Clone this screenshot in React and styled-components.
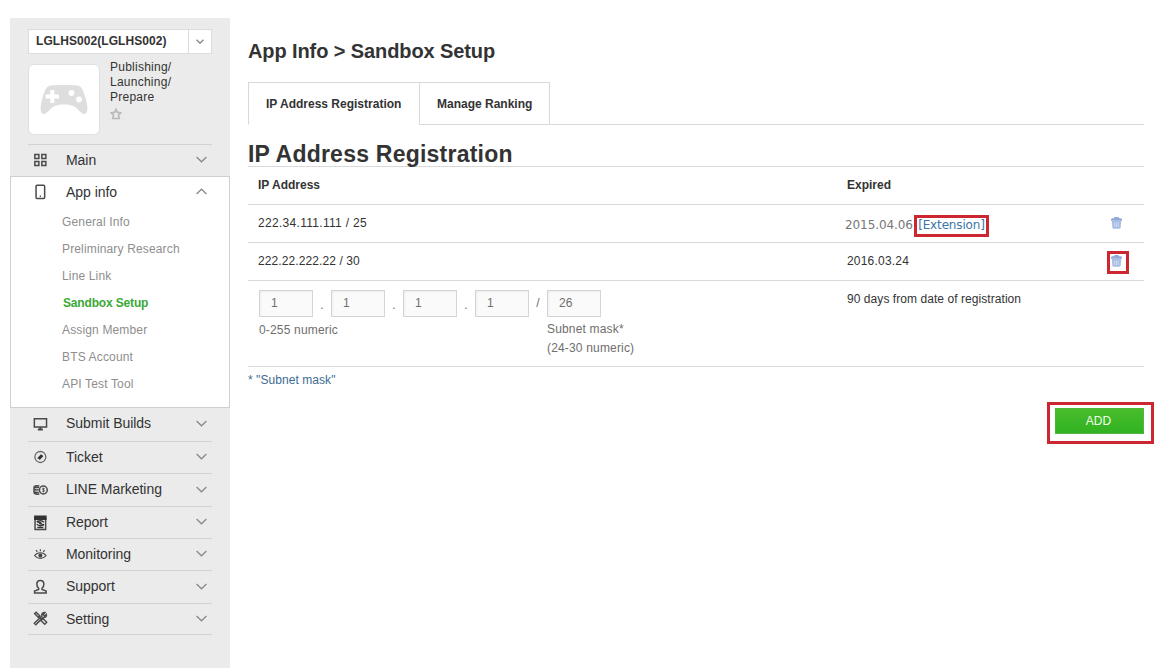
import React from "react";
import styled, { createGlobalStyle, css } from "styled-components";

const Global = createGlobalStyle`
  * { box-sizing: border-box; }
  body { margin: 0; background: #fff; overflow: hidden; }
  #root { font-family: "Liberation Sans", Arial, sans-serif; font-size: 12px; color: #333; }
`;

const Page = styled.div`
  display: flex;
  align-items: flex-start;
  width: 1155px;
  height: 668px;
  padding: 18px 0 0 10px;
`;

const Sidebar = styled.aside`
  width: 220px;
  height: 650px;
  flex: none;
  background: #ebebeb;
  padding-top: 11px;
`;

const AppSelect = styled.div`
  display: flex;
  width: 184px;
  height: 25px;
  margin-left: 18px;
  background: #fff;
  border: 1px solid #dcdcdc;
`;

const AppName = styled.div`
  flex: 1;
  padding-left: 7px;
  line-height: 23px;
  font-weight: bold;
  letter-spacing: ${(p) => p.$spacing}px;
  white-space: nowrap;
`;

const SelectArrow = styled.div`
  width: 23px;
  display: flex;
  align-items: center;
  justify-content: center;
  border-left: 1px solid #dcdcdc;
`;

const AppCard = styled.div`
  display: flex;
  height: 80px;
  margin: 10px 18px 0;
`;

const Thumb = styled.div`
  width: 72px;
  height: 71px;
  display: flex;
  align-items: center;
  justify-content: center;
  background: #fff;
  border: 1px solid #e0e0e0;
  border-radius: 6px;
`;

const Status = styled.div`
  margin: -4px 0 0 10px;
  line-height: 15px;
  letter-spacing: 0.25px;
  svg { display: block; margin-top: 3px; }
`;

const Row = styled.div`
  display: flex;
  align-items: center;
  height: ${(p) => p.$h}px;
  margin: 0 18px;
  padding: 0 5px ${(p) => p.$lift}px 4px;
  ${(p) => p.$top && css`border-top: 1px solid #d2d2d2;`}
  ${(p) => p.$bottom && css`border-bottom: 1px solid #d2d2d2;`}
`;

const RowIcon = styled.span`
  width: 16px;
  display: flex;
  justify-content: center;
  padding-top: ${(p) => p.$drop || 0}px;
`;

const RowLabel = styled.span`
  flex: 1;
  margin-left: 18px;
  font-size: 14px;
  letter-spacing: -0.04px;
`;

const OpenPanel = styled.div`
  height: 232px;
  background: #fff;
  border: 1px solid #d0d0d0;
  ${Row} { margin: 0 17px; }
`;

const SubItem = styled.div`
  height: 27px;
  line-height: 27px;
  padding-left: ${(p) => (p.$active ? 52 : 51)}px;
  color: ${(p) => (p.$active ? "#3aa935" : "#8e8e8e")};
  font-weight: ${(p) => (p.$active ? "bold" : "normal")};
  letter-spacing: ${(p) => (p.$active ? -0.16 : 0.15)}px;
`;

const Main = styled.main`
  width: 896px;
  margin-left: 18px;
`;

const Title = styled.h1`
  margin: 21px 0 0;
  font-size: 20px;
  line-height: 24px;
  letter-spacing: -0.1px;
`;

const Tabs = styled.div`
  display: flex;
  height: 43px;
  margin-top: 19px;
`;

const Tab = styled.div`
  width: ${(p) => p.$w}px;
  padding-left: 17px;
  line-height: 42px;
  font-weight: bold;
  border: 1px solid #d9d9d9;
  border-right-width: ${(p) => (p.$active ? 0 : 1)}px;
  border-bottom-color: ${(p) => (p.$active ? "transparent" : "#d9d9d9")};
`;

const TabRest = styled.div`
  flex: 1;
  border-bottom: 1px solid #d9d9d9;
`;

const Heading = styled.h2`
  margin: 16px 0 0;
  height: 25px;
  font-size: 23px;
  line-height: 26px;
  letter-spacing: 0.23px;
`;

const TableRow = styled.div`
  display: grid;
  grid-template-columns: 599px 1fr 33px;
  height: ${(p) => p.$h || 38}px;
  border-top: 1px solid #d9d9d9;
  line-height: 36px;
  font-weight: ${(p) => (p.$head ? "bold" : "normal")};
`;

const IpCell = styled.div`
  padding-left: 10px;
  letter-spacing: ${(p) => p.$spacing || 0}px;
`;

const DateCell = styled.div`
  letter-spacing: ${(p) => p.$spacing || 0}px;
`;

const ExpiringDate = styled.div`
  margin-left: -2px;
  font-family: "DejaVu Sans", Verdana, sans-serif;
  line-height: 40px;
  letter-spacing: -0.08px;
  color: #777;
`;

const Marked = styled.span`
  position: relative;
  display: inline-block;
  margin-left: ${(p) => p.$gap || 0}px;
  &::after {
    content: "";
    position: absolute;
    inset: ${(p) => p.$inset};
    border: 3px solid #cc2630;
  }
`;

const ExtensionLink = styled.a`
  color: #3a76a8;
  letter-spacing: -0.15px;
`;

const TrashCell = styled.div`
  line-height: 0;
  padding-top: 12px;
`;

const Fields = styled.div`
  display: flex;
  align-items: flex-start;
  padding: 9px 0 0 11px;
  color: #6e6e6e;
  letter-spacing: 0.17px;
`;

const Field = styled.div`
  width: 54px;
  white-space: nowrap;
`;

const Box = styled.div`
  height: 27px;
  padding-left: 11px;
  line-height: 25px;
  background: #fafafa;
  border: 1px solid #d4d4d4;
  box-shadow: inset 1px 1px 2px #eee;
`;

const Note = styled.div`
  line-height: 19px;
  padding-top: ${(p) => p.$top}px;
`;

const Separator = styled.span`
  width: 18px;
  text-align: center;
  line-height: ${(p) => p.$lh}px;
`;

const Footer = styled.div`
  height: 26px;
  border-top: 1px solid #d9d9d9;
  line-height: 27px;
  letter-spacing: 0.06px;
  color: #3c6c94;
`;

const Actions = styled.div`
  display: flex;
  justify-content: flex-end;
  margin-top: 16px;
`;

const AddButton = styled.button`
  display: block;
  width: 89px;
  height: 26px;
  padding: 0 2px 0 0;
  border: 1px solid #52b53c;
  background: linear-gradient(#49bd2c, #31b222);
  color: #f0ffe9;
  font: 12px "Liberation Sans", Arial, sans-serif;
`;

const Chevron = ({ up, small }) => (
  <svg width={small ? 8 : 11} height={small ? 5 : 7} viewBox="0 0 11 7" fill="none" stroke="#8a8a8a" strokeWidth={small ? 2 : 1.3}>
    <path d={up ? "M.6 6 5.500 1.200 10.400 6" : "M.6 1 5.500 5.800 10.400 1"} />
  </svg>
);

const Gamepad = () => (
  <svg width="48" height="32" viewBox="0 0 48 32">
    <path fill="#dedede" d="M9 2C12 .8 36 .8 39 2C42 3 43.500 7 45.500 14C47.300 20 48.500 27 46 29.300C43 31 41 28.800 37 24.500C34 21.500 30 20.500 24 20.500S14 21.500 11 24.500C7 28.800 5 31 2 29.300C-.5 27 .7 20 2.500 14C4.500 7 6 3 9 2Z" />
    <path fill="#fff" d="M10.300 6h4v4.500h4.700v4h-4.700V19h-4v-4.500H5.500v-4h4.800z" />
    <circle cx="31.500" cy="9" r="2.900" fill="#fff" />
    <circle cx="39" cy="15.500" r="2.900" fill="#fff" />
  </svg>
);

const Star = () => (
  <svg width="12" height="12" viewBox="0 0 12 12" fill="none" stroke="#b9b9bc" strokeWidth="1.600">
    <path d="M6 1.300 7.400 4.400 10.800 4.700 8.500 7.100 9.200 10.500H2.800L3.500 7.100 1.200 4.700 4.600 4.400Z" />
  </svg>
);

const Trash = () => (
  <svg width="11" height="12" viewBox="0 0 11 12">
    <path fill="#8fa8d6" d="M3.500 0h4l.5 1.200h2l1 1v1.600H0V2.200l1-1h2z" />
    <path fill="#a9bde2" d="M.8 3.800h9.400L9.600 11l-1 .8H2.400l-1-.8z" />
    <path stroke="#d3dff2" strokeWidth=".8" d="M3.700 5.500v4.500M5.500 5.500v4.500M7.300 5.500v4.500" />
  </svg>
);

const drawings = {
  grid: <path d="M1.500 2.500h4v4h-4zM8.500 2.500h4v4h-4zM1.500 9.500h4v4h-4zM8.500 9.500h4v4h-4z" />,
  phone: <><rect x="2.700" y="1.200" width="8.600" height="13.300" rx="1" /><path d="M7 11.500v1.600" strokeWidth="1.200" /></>,
  monitor: <><path d="M1 2.700h12.200v8.300H1z" /><path d="M7 11v2.200M4.500 13.600h5" strokeWidth="2" /></>,
  ticket: <><circle cx="7" cy="8" r="5.500" strokeWidth="1.300" stroke="#6b6b6b" /><path d="m3.800 9.200 3.800-4 1 .9 1.500.9-3.700 3.900-.9-.900z" fill="#333" stroke="none" /></>,
  coins: <><circle cx="10" cy="8" r="3.900" /><path d="M6 4.200C4.500 3.300.7 3.700.7 5v5.500c0 1.500 3.600 2 5.300 1.300M.7 7.200c1.500 1 3.300.8 4.800.4M.7 9.700c1.500 1 3.300.8 4.800.4M.7 5C2 5.700 4 5.700 5.700 5.200" strokeWidth="1.500" /><path d="M11.300 6.500H9.400v1.400h1.400v1.500H8.900M10.100 5.600v4.800" strokeWidth=".8" /></>,
  report: <><path d="M1.700 2.200V14.500h10.600V2.200" /><path d="M1.500 1.300h11v2.900h-11z" fill="#333" stroke="#333" /><path d="M3.500 7.200C5 5.300 9 5.300 10.500 7.200M3.500 9.200C5 11.200 9 11.200 10.500 9.200M3.500 6l7 4.500M4 12.500h6" strokeWidth="1.400" stroke="#333" /><circle cx="7" cy="8.200" r="1.200" fill="#333" stroke="none" /></>,
  eye: <><path d="M1.300 9.500C4 5.800 10 5.800 12.700 9.500 10 13.200 4 13.200 1.300 9.500ZM7 3.200v2M2.800 4.200 4 6M11.200 4.200 10 6" strokeWidth="1.200" /><circle cx="7" cy="9.500" r="2" fill="#444" stroke="none" /></>,
  user: <path d="M5.300 9.200C3.900 8 3.400 6.500 3.500 4.700 3.600 2.500 5 1.600 7 1.600s3.400.9 3.500 3.100c.1 1.800-.4 3.300-1.800 4.500v1.300l4.100 1.500v2H1.200v-2l4.100-1.500z" />,
  tools: <><path d="m1.300 2.600 1.500-1.300 3.500 3.500-1.500 1.400zM5.600 5.600l2 2M7.500 9.500l2-2 3.800 3.700-1.900 2zM1 12.300 8.500 5C8 3 9.300 1.300 11.500 1.600L9.800 3.500l1.500 1.500L13 3.400c.5 2.200-1.300 3.600-3.200 3L2.500 13.800z" strokeWidth="1.500" /></>,
};

const MenuIcon = ({ name }) => (
  <svg width="15" height="16" viewBox="0 0 14.300 16" fill="none" stroke="#4a4a4a" strokeWidth="1.500">
    {drawings[name]}
  </svg>
);

const MenuRow = ({ icon, label, h, top, bottom, up, drop, lift = 2 }) => (
  <Row $h={h} $top={top} $bottom={bottom} $lift={lift}>
    <RowIcon $drop={drop}><MenuIcon name={icon} /></RowIcon>
    <RowLabel>{label}</RowLabel>
    <Chevron up={up} />
  </Row>
);

const subItems = ["General Info", "Preliminary Research", "Line Link", "Sandbox Setup", "Assign Member", "BTS Account", "API Test Tool"];

const lowerMenu = [
  ["monitor", "Submit Builds", 34, 3, 2],
  ["ticket", "Ticket", 32, 2, 1],
  ["coins", "LINE Marketing", 33, 2, 1],
  ["report", "Report", 32, 2, 2],
  ["eye", "Monitoring", 32, 2, 0],
  ["user", "Support", 33, 2, 2],
  ["tools", "Setting", 31, 1, 0],
];

export default function App() {
  return (
    <Page>
      <Global />
      <Sidebar>
        <AppSelect>
          <AppName $spacing={0.07}>LGLHS002(LGLHS002)</AppName>
          <SelectArrow><Chevron small /></SelectArrow>
        </AppSelect>
        <AppCard>
          <Thumb><Gamepad /></Thumb>
          <Status>Publishing/<br />Launching/<br />Prepare<Star /></Status>
        </AppCard>
        <MenuRow icon="grid" label="Main" h={32} top drop={1} />
        <OpenPanel>
          <MenuRow icon="phone" label="App info" h={32} up lift={3} />
          {subItems.map((t) => <SubItem key={t} $active={t === "Sandbox Setup"}>{t}</SubItem>)}
        </OpenPanel>
        {lowerMenu.map(([icon, label, h, lift, drop]) => (
          <MenuRow key={label} icon={icon} label={label} h={h} lift={lift} drop={drop} bottom />
        ))}
      </Sidebar>
      <Main>
        <Title>App Info &gt; Sandbox Setup</Title>
        <Tabs>
          <Tab $w={171} $active>IP Address Registration</Tab>
          <Tab $w={131}>Manage Ranking</Tab>
          <TabRest />
        </Tabs>
        <Heading>IP Address Registration</Heading>
        <TableRow $head>
          <IpCell>IP Address</IpCell>
          <DateCell>Expired</DateCell>
        </TableRow>
        <TableRow>
          <IpCell $spacing={0.3}>222.34.111.111 / 25</IpCell>
          <ExpiringDate>
            2015.04.06 <Marked $inset="10px -4px 8px -4px" $gap={1.5}><ExtensionLink>[Extension]</ExtensionLink></Marked>
          </ExpiringDate>
          <TrashCell><Trash /></TrashCell>
        </TableRow>
        <TableRow>
          <IpCell $spacing={0.1}>222.22.222.22 / 30</IpCell>
          <DateCell $spacing={0.2}>2016.03.24</DateCell>
          <TrashCell><Marked $inset="-4px -7px -7px -4px"><Trash /></Marked></TrashCell>
        </TableRow>
        <TableRow $h={86}>
          <Fields>
            <Field><Box>1</Box><Note $top={4}>0-255 numeric</Note></Field>
            <Separator $lh={30}>.</Separator>
            <Field><Box>1</Box></Field>
            <Separator $lh={30}>.</Separator>
            <Field><Box>1</Box></Field>
            <Separator $lh={30}>.</Separator>
            <Field><Box>1</Box></Field>
            <Separator $lh={27}>/</Separator>
            <Field><Box>26</Box><Note $top={3}>Subnet mask*<br />(24-30 numeric)</Note></Field>
          </Fields>
          <DateCell $spacing={0.06}>90 days from date of registration</DateCell>
        </TableRow>
        <Footer>* "Subnet mask"</Footer>
        <Actions>
          <Marked $inset="-6px -10px -10px -8px"><AddButton>ADD</AddButton></Marked>
        </Actions>
      </Main>
    </Page>
  );
}
